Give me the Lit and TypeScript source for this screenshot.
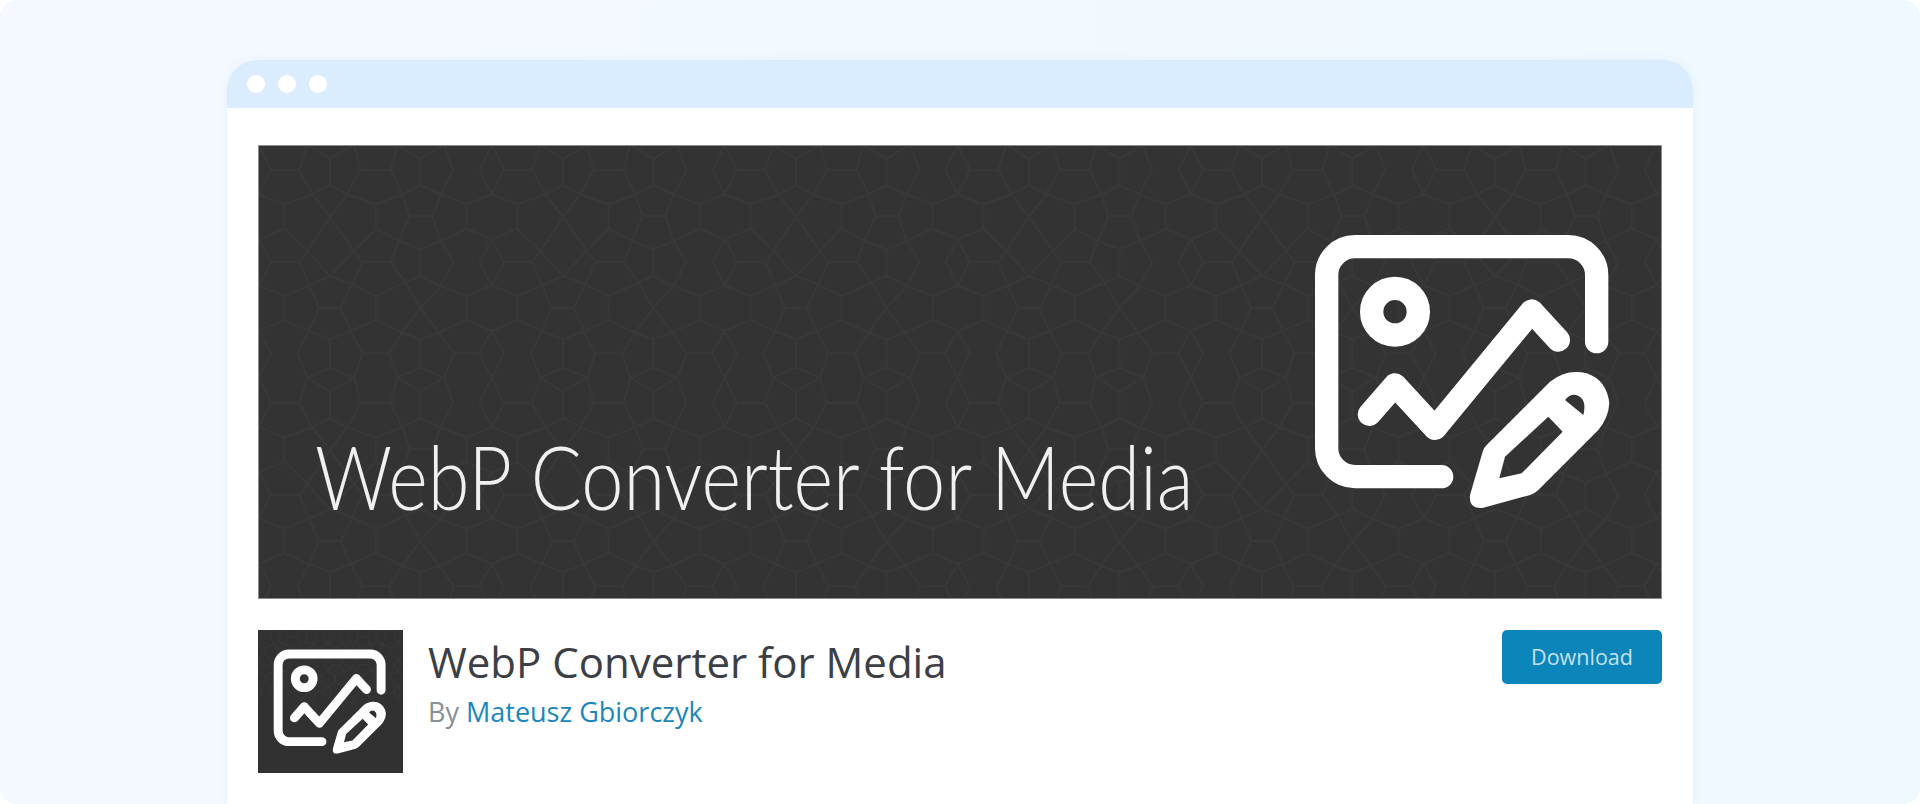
import { LitElement, html, css, svg } from 'lit';
import { customElement } from 'lit/decorators.js';

// one 699x699 tile of the banner's background, traced at 3x
const TILE = `M213 38V118M160 145L213 118L265 145M120 72L160 145L213 213L285 315L310 348
M305 72L265 145L213 213L145 315L121 348M305 72H395M735 72H820M120 72L145 -4M305 72L285 -4
M395 72L415 -4M583 72L555 -4M662 72L698 -4L735 72M395 72L430 145L452 210H520L545 145L583 72
M484 38V118M430 145L484 118L545 145M662 72L698 145L735 72M545 145L623 175L698 145L775 175L860 145
M265 145L350 175L430 145M350 175V248M623 175V248M775 175V248M623 248L698 280L775 248
M623 248L545 285L484 310L420 285L350 248M520 210L545 285L583 348L545 420L484 486L440 410L395 348L420 285L452 210
M350 248L285 315L213 390L145 315L76 248M310 348H395M36 348H121M310 348L280 415L245 486H180L151 418L121 348
M484 310V390M350 450L440 410L484 390L545 420L623 450L698 418L775 450M662 348L698 280L735 348L698 418Z
M213 390L280 415L350 450M213 390L151 418L76 450M350 450V522M623 450V522M76 450V522
M245 486L275 555L310 622M180 486L150 555L115 622M76 522L150 555L213 580L275 555L350 522L430 560L484 580L540 560L623 522L698 555L775 522
M484 486L540 560L585 622M484 486L430 560L390 622M213 580V665M484 580V665M698 555L735 622L698 695L660 622Z
M310 622H390M585 622H660M115 622L145 695M310 622L285 695M390 622L415 695M585 622L555 695
M213 665L285 695L213 737L145 695ZM484 665L555 695L484 737L415 695Z`;

const pattern = (cols: number, rows: number, scale: number, width = 7) => {
  const tiles = [];
  for (let r = -1; r < rows; r++) {
    for (let c = -1; c < cols; c++) {
      tiles.push(svg`<path d=${TILE} transform="translate(${c * 699} ${r * 699})"></path>`);
    }
  }
  return html`<svg class="pattern" width="100%" height="100%" aria-hidden="true">
    <g transform="scale(${scale})" fill="none" stroke="#383838" stroke-width=${width}>${tiles}</g>
  </svg>`;
};

const logo = (cls: string) => html`<svg class=${cls} viewBox="0 0 1020 960" aria-hidden="true">
  <g fill="none" stroke="#fff" stroke-width="70" stroke-linecap="round" stroke-linejoin="round">
    <path d="M920 395V195A85 85 0 0 0 835 110H195A85 85 0 0 0 110 195V715A85 85 0 0 0 195 800H455"></path>
    <circle cx="315" cy="305" r="70"></circle>
    <path d="M238 613L315 525L435 655L725 303L805 390"></path>
  </g>
  <path fill="#fff" fill-rule="evenodd" d="M590 705L780 515Q830 475 890 490Q950 510 958 580Q955 625 925 660L745 840Q735 850 720 855L580 893Q535 900 540 855L578 725Q582 712 590 705Z
    M775 620L818 665L695 790L628 805L645 740ZM825 570Q845 545 870 560Q890 575 880 615Z"></path>
</svg>`;

@customElement('app-root')
export class AppRoot extends LitElement {
  static styles = css`
    :host {
      display: block;
      height: 804px;
      overflow: hidden;
      border-radius: 16px;
      background: linear-gradient(100deg, #f5f9ff 0%, #eef9ff 100%);
      font-family: 'Open Sans', sans-serif;
    }

    .window {
      width: 1466px;
      height: 744px;
      margin: 0 auto;
      position: relative;
      top: 60px;
      background: #fff;
      border-radius: 30px 30px 0 0;
      box-shadow: 0 0 8px rgba(190, 215, 240, 0.25);
    }

    .bar {
      height: 48px;
      box-sizing: border-box;
      display: flex;
      align-items: center;
      gap: 13px;
      padding: 0 20px;
      background: #d9edff;
      border-radius: 30px 30px 0 0;
    }

    .dot {
      width: 18px;
      height: 18px;
      border-radius: 50%;
      background: #fff;
    }

    .content {
      padding: 37px 31px 0;
    }

    .banner {
      position: relative;
      height: 454px;
      box-sizing: border-box;
      overflow: hidden;
      background: #333;
      border: 1px solid #8c8c8c;
    }

    .pattern {
      position: absolute;
      left: 0;
      top: 0;
    }

    .banner-title {
      position: absolute;
      left: 56px;
      top: 275px;
      color: #f0f0f0;
      font-family: Lato, sans-serif;
      font-weight: 300;
      font-size: 88px;
      line-height: 110px;
      white-space: nowrap;
      transform: scaleX(0.861);
      transform-origin: left center;
    }

    .banner-logo {
      position: absolute;
      left: 1031px;
      top: 64px;
      width: 340px;
      height: 320px;
    }

    .info {
      display: flex;
      margin-top: 31px;
    }

    .thumb {
      position: relative;
      flex: none;
      width: 145px;
      height: 143px;
      overflow: hidden;
      background: #313131;
    }

    .thumb-logo {
      position: absolute;
      left: 6px;
      top: 10px;
      width: 130px;
      height: 122px;
    }

    .meta {
      flex: 1;
      margin-left: 25px;
    }

    h1 {
      margin: 3px 0 0;
      font-weight: 400;
      font-size: 42px;
      line-height: 57px;
      color: #3c4045;
      white-space: nowrap;
    }

    .by {
      margin-top: 3px;
      font-size: 27px;
      line-height: 38px;
      color: #8a8f94;
    }

    .by a {
      color: #1b87bb;
      text-decoration: none;
    }

    .download {
      flex: none;
      width: 160px;
      height: 54px;
      border-radius: 5px;
      background: #0c85ba;
      color: #c4e0ec;
      font-size: 21.5px;
      line-height: 54px;
      text-align: center;
    }
  `;

  render() {
    return html`
      <div class="window">
        <div class="bar">
          <span class="dot"></span><span class="dot"></span><span class="dot"></span>
        </div>
        <div class="content">
          <div class="banner">
            ${pattern(7, 2, 1 / 3)}
            <div class="banner-title">WebP Converter for Media</div>
            ${logo('banner-logo')}
          </div>
          <div class="info">
            <div class="thumb">
              ${pattern(3, 1, 0.1, 10)}
              ${logo('thumb-logo')}
            </div>
            <div class="meta">
              <h1>WebP Converter for Media</h1>
              <div class="by">By <a href="#">Mateusz Gbiorczyk</a></div>
            </div>
            <div class="download">Download</div>
          </div>
        </div>
      </div>
    `;
  }
}
